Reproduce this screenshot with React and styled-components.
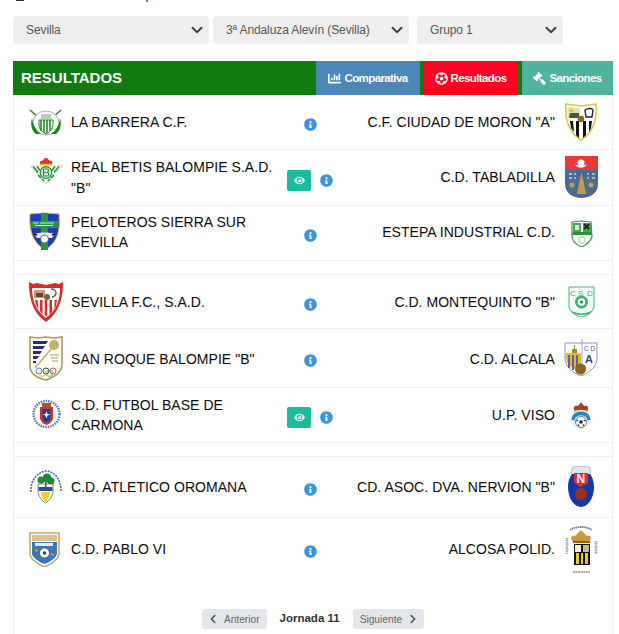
import React from 'react';
import styled, { createGlobalStyle } from 'styled-components';
import { FaInfoCircle, FaEye, FaChartBar, FaFutbol, FaGavel, FaChevronLeft, FaChevronRight } from 'react-icons/fa';
import { ChevronDown } from 'lucide-react';

const GlobalStyle = createGlobalStyle`
    html, body {
        margin: 0;
        padding: 0;
        height: 634px;
        overflow: hidden;
        background: #fff;
        font-family: "Liberation Sans", Arial, sans-serif;
    }
`

const Page = styled.div`
    width: 619px;
`

const TopStrip = styled.div`
    display: flex;
    height: 2px;
    padding-left: 16px;
`

const TopMark = styled.div`
    width: ${props => props.$w}px;
    height: ${props => props.$h}px;
    margin-right: ${props => props.$gap || 0}px;
    background: ${props => props.$color};
`

const Filters = styled.div`
    display: flex;
    margin: 14px 0 17px 13px;
`

const SelectWrap = styled.div`
    position: relative;
    width: ${props => props.$w}px;
    height: 28px;
    margin-right: ${props => props.$gap}px;
`

const FilterSelect = styled.select`
    appearance: none;
    width: 100%;
    height: 100%;
    padding: 0 13px;
    border: none;
    border-radius: 4px;
    background: #eee;
    color: #555;
    font-family: "Liberation Sans", Arial, sans-serif;
    font-size: 12px;
    letter-spacing: -0.1px;
`

const SelectArrow = styled(ChevronDown)`
    position: absolute;
    top: 5px;
    right: 3px;
    color: #444;
    pointer-events: none;
`

const Panel = styled.div`
    width: 600px;
    margin-left: 13px;
`

const PanelHead = styled.div`
    display: flex;
    align-items: stretch;
    height: 34px;
    background: #107c10;
`

const PanelTitle = styled.div`
    flex: 1;
    padding-left: 8px;
    color: #fff;
    font-size: 15px;
    font-weight: 700;
    line-height: 34px;
`

const Tab = styled.div`
    display: flex;
    align-items: center;
    justify-content: center;
    gap: 3px;
    width: ${props => props.$w}px;
    margin-left: ${props => props.$gap || 0}px;
    background: ${props => props.$color};
    color: #fff;
    font-size: 11.5px;
    font-weight: 700;
    letter-spacing: -0.6px;
    svg {
        font-size: 13px;
    }
`

const FlippedGavel = styled(FaGavel)`
    transform: scaleX(-1);
`

const PanelBody = styled.div`
    border-left: 1px solid #eee;
    border-right: 1px solid #eee;
    width: 600px;
    box-sizing: border-box;
`

const Row = styled.div`
    display: grid;
    grid-template-columns: 271px 50px 1fr;
    align-items: center;
    height: ${props => props.$h}px;
    box-sizing: border-box;
    border-bottom: ${props => props.$last ? 'none' : '1px solid #f0f0f0'};
`

const Spacer = styled.div`
    height: 14px;
    box-sizing: border-box;
    border-bottom: 1px solid #f0f0f0;
`

const Team = styled.div`
    display: flex;
    align-items: center;
    justify-content: ${props => props.$away ? 'flex-end' : 'flex-start'};
    gap: ${props => props.$away ? 9 : 8}px;
    height: 100%;
    padding: ${props => props.$away ? '0 14px 0 0' : '0 0 0 15px'};
`

const TeamName = styled.div`
    max-width: 214px;
    margin-top: ${props => props.$shift || 0}px;
    color: #0a0a0a;
    font-size: 14px;
    letter-spacing: 0.04px;
    line-height: 20.5px;
    text-align: ${props => props.$away ? 'right' : 'left'};
`

const CrestSlot = styled.div`
    flex: none;
    align-self: flex-start;
    width: 34px;
    margin-top: ${props => props.$top}px;
    line-height: 0;
`

const Middle = styled.div`
    display: flex;
    align-items: center;
    justify-content: center;
    gap: 9px;
    padding-top: 5px;
`

const InfoIcon = styled(FaInfoCircle)`
    color: #3b94e2;
    font-size: 13px;
`

const WatchButton = styled.div`
    display: flex;
    align-items: center;
    justify-content: center;
    width: 24px;
    height: 21px;
    border-radius: 2px;
    background: #1abc9c;
    color: #d8f5ef;
    font-size: 11px;
`

const Pager = styled.div`
    display: flex;
    justify-content: center;
    align-items: center;
    gap: 13px;
    padding: 29px 0 20px;
`

const PagerButton = styled.div`
    display: flex;
    align-items: center;
    gap: 6px;
    height: 20px;
    padding: ${props => props.$next ? '0 6px 0 7px' : '0 7px 0 6px'};
    border-radius: 3px;
    background: #e2e6ea;
    color: #666;
    font-size: 10.2px;
    svg {
        font-size: 10px;
        color: #555;
    }
`

const PagerLabel = styled.div`
    color: #333;
    font-size: 11.5px;
    font-weight: 700;
    padding-bottom: 3px;
`

const Barrera = () => (
    <svg width="34" height="27" viewBox="0 0 34 27">
        <path d="M1 1l9 8M32 1l-9 8" stroke="#3c7a3c" strokeWidth="1.6" />
        <ellipse cx="17" cy="14" rx="13" ry="12" fill="#fff" stroke="#aaa" />
        <path d="M3 9c1 8 4 12 9 16H7C3 22 1 16 3 9zM31 9c-1 8-4 12-9 16h5c4-3 6-9 4-16z" fill="#1a861a" />
        <path d="M10 11h14v4c0 5-3 8-7 10-4-2-7-5-7-10z" fill="#fff" stroke="#1a861a" />
        <path d="M12 11v11M15 11v13M18 11v13M21 11v11" stroke="#1a861a" strokeWidth="1.500" />
        <path d="M12 5h10v5H12z" fill="#bcccbc" />
    </svg>
)

const Moron = () => (
    <svg width="34" height="38" viewBox="0 0 34 38">
        <path d="M2 1l15 2 15-2c1 13-2 28-15 36C4 29 1 14 2 1z" fill="#fff" stroke="#d9c64a" strokeWidth="1.500" />
        <path d="M3 4l13 1v9H4z" fill="#e4e0c8" />
        <path d="M6 10h9v5H5z" fill="#4a5a30" />
        <path d="M5 7l2-2 1 2 2-1-1 3H6z" fill="#e3c52c" />
        <path d="M21 7c3-2 7-2 8 0l-1 7h-6z" fill="none" stroke="#222" strokeWidth="1.400" />
        <path d="M6 18h3l1 11-3-4zM12 18h3v17l-3-3zM19 18h3v14l-3 3zM25 18h3l-1 7-2 4z" fill="#111" />
        <circle cx="17" cy="16" r="3.200" fill="#8a6a1e" />
    </svg>
)

const Betis = () => (
    <svg width="34" height="27" viewBox="0 0 34 27">
        <path d="M11 8c-1-3 1-5 2-4l3-3h2l3 3c2-1 3 1 2 4z" fill="#d9362c" />
        <path d="M11 7.500h12" stroke="#e5bd2c" strokeWidth="1.600" />
        <path d="M1 9l32 0-16 18z" fill="#fff" stroke="#c9c47a" strokeWidth=".7" />
        <path d="M4 9.500l5 6M8 9.500l3 4M30 9.500l-5 6M26 9.500l-3 4M12 21l-3-3M22 21l3-3M15 24l-2-2M19 24l2-2" stroke="#22913c" strokeWidth="1.700" />
        <circle cx="17" cy="15.500" r="5.800" fill="#d8ead5" stroke="#22863c" strokeWidth="1.200" />
        <path d="M14.500 12v7M14.500 12h3.500c2 0 2 3 0 3.500 2.500 0 2.500 3.500 0 3.500h-3.500M14.500 15.500h3" fill="none" stroke="#22863c" strokeWidth="1.100" />
    </svg>
)

const Tabladilla = () => (
    <svg width="34" height="42" viewBox="0 0 34 42">
        <path d="M1 0h33v14H1z" fill="#e8393a" />
        <circle cx="17" cy="7" r="3.500" fill="#fff" />
        <path d="M11 8c2 5 10 5 12 0-2 2-10 2-12 0z" fill="#fff" />
        <path d="M1 14h33v14c0 9-8 14-16.500 14S1 37 1 28z" fill="#4a6b90" />
        <path d="M17.500 16l2.500 12 2 10H13l2-10z" fill="#c69a4c" />
        <circle cx="8" cy="29" r="2.500" fill="#c69a4c" />
        <circle cx="27" cy="29" r="2.500" fill="#c69a4c" />
        <path d="M5 18h3M5 22h3M10 18h2M10 22h2M23 18h2M23 22h2M28 18h3M28 22h3" stroke="#c9d3de" strokeWidth="1.400" />
    </svg>
)

const Peloteros = () => (
    <svg width="34" height="38" viewBox="0 0 34 38">
        <path d="M1 2l14-1 15 1c1 15 0 27-14 36C3 30 0 17 1 2z" fill="#1d3db4" stroke="#c8b44a" />
        <path d="M12 1h7v37h-7z" fill="#2e8f4a" />
        <path d="M2 9h27v7H2z" fill="#2e8f4a" />
        <path d="M4 11h5M11 11h14M6 13.500h18" stroke="#cfe8d0" strokeWidth="1" />
        <path d="M5 22c6-2 15-2 21 0l-3 4H8z" fill="#e8e8e8" />
        <circle cx="15.500" cy="27" r="4" fill="#fff" stroke="#333" strokeWidth=".7" />
        <path d="M8 23l-3-1M23 23l3-1" stroke="#111" strokeWidth="1.500" />
    </svg>
)

const Estepa = () => (
    <svg width="34" height="27" viewBox="0 0 34 27">
        <path d="M8 2l9-1 10 1 1 15c-2 5-6 8-10.500 10C13 25 9 22 8 17z" fill="#fff" stroke="#2e9a44" strokeWidth="1.200" />
        <path d="M9 3h8v10H9zM19 13h8V3h-8z" fill="#3fae4a" />
        <path d="M20 4l5 5M25 4l-5 5" stroke="#222" strokeWidth="2" />
        <path d="M11 5h4v5h-4z" fill="#e9f5e9" />
        <path d="M8.500 12h19v3h-19z" fill="#2d8f3c" />
        <circle cx="18" cy="20" r="3.200" fill="#fff" stroke="#bbb" />
    </svg>
)

const Sevilla = () => (
    <svg width="34" height="40" viewBox="0 0 34 40">
        <path d="M0 0l4 2 4-1 9 2 9-2 4 1 4-2c0 15-3 30-17 40C3 30 0 15 0 0z" fill="#d92c2c" />
        <path d="M3 6h28c0 11-3 22-14 30C6 28 3 17 3 6z" fill="#fff" />
        <path d="M6 18h2.500l1 9-2-3zM11 18h2.500v14l-2.500-3zM15.700 18h2.500v17l-2.500-2zM20.500 18H23v12l-2.500 3zM25.500 18H28l-1 6-1.500 3z" fill="#d92c2c" />
        <path d="M5 8h11v8H5z" fill="#caa07a" />
        <path d="M7 11h7v4H7z" fill="#7a3b2b" />
        <circle cx="18" cy="15" r="3" fill="#8a5a2c" />
        <path d="M22 7c3 0 5 2 5 4s-2 4-4 4" fill="none" stroke="#555" strokeWidth="1.400" />
    </svg>
)

const Montequinto = () => (
    <svg width="34" height="31" viewBox="0 0 34 31">
        <path d="M5 1h25v20c-2 6-7 9-12.500 10C12 30 7 27 5 21z" fill="#f4fbf6" stroke="#48b27a" />
        <text x="6" y="9.500" fontSize="8" fill="#48b27a" fontFamily="Liberation Sans">C</text>
        <text x="14" y="9.500" fontSize="8" fill="#48b27a" fontFamily="Liberation Sans">S</text>
        <text x="23" y="9.500" fontSize="8" fill="#48b27a" fontFamily="Liberation Sans">D</text>
        <circle cx="17.500" cy="16" r="6.500" fill="#3fae72" />
        <circle cx="17.500" cy="16" r="3.800" fill="#fff" />
        <circle cx="17.500" cy="16" r="1.500" fill="#1f7a4a" />
        <path d="M8 26c5 3 14 3 19 0" stroke="#48b27a" strokeWidth="1.500" fill="none" />
    </svg>
)

const SanRoque = () => (
    <svg width="34" height="45" viewBox="0 0 34 45">
        <path d="M1 1l8 1 8-1 8 1 8-1v28c0 8-8 12-16 15C8 42 1 38 1 30z" fill="#fdfcf4" stroke="#a99b5c" strokeWidth="1.600" />
        <path d="M4 5h15l-2 3H4zM4 10h12l-2 3H4zM4 15h9l-2 3H4zM4 20h6l-2 3H4zM4 25h3v2H4z" fill="#2f2c6e" />
        <path d="M6 32l17-20" stroke="#b8a964" strokeWidth="1.200" />
        <circle cx="25" cy="9" r="5" fill="#bfb06a" />
        <path d="M21 19h9M22 22h7M23 25h6" stroke="#a89a5a" strokeWidth="1.100" />
        <g fill="none" strokeWidth=".9">
            <circle cx="10" cy="35" r="3" stroke="#4a7fc0" />
            <circle cx="17" cy="35" r="3" stroke="#333" />
            <circle cx="24" cy="35" r="3" stroke="#c94a4a" />
            <circle cx="13.500" cy="37.500" r="3" stroke="#d8b84a" />
            <circle cx="20.500" cy="37.500" r="3" stroke="#4aa05a" />
        </g>
    </svg>
)

const Alcala = () => (
    <svg width="34" height="37" viewBox="0 0 34 37">
        <path d="M1 4h32v15c0 9-8 15-16 18C9 34 1 28 1 19z" fill="#fff" stroke="#8b93c4" strokeWidth="1" />
        <path d="M18 0v37" stroke="#8b93c4" strokeWidth=".8" />
        <path d="M2 14h15v18C9 30 2 26 2 19z" fill="#d8bd3c" />
        <path d="M5 16v13M9 16v15M13 16v15" stroke="#6c5aa6" strokeWidth="2" />
        <path d="M8 10h5v4H8zM10 6h1v4h-1z" fill="#a8893c" />
        <text x="20" y="12" fontSize="6.500" fill="#4a5290" fontFamily="Liberation Sans">C D</text>
        <text x="21" y="24" fontSize="11" fontWeight="700" fill="#3c4484" fontFamily="Liberation Sans">A</text>
        <circle cx="16.500" cy="30" r="5.500" fill="#8a6420" />
    </svg>
)

const Carmona = () => (
    <svg width="34" height="33" viewBox="0 0 34 33">
        <circle cx="17.500" cy="17" r="13" fill="none" stroke="#5c7cb0" strokeWidth="2.600" strokeDasharray="1.500 1" />
        <path d="M13 6h9v4h-9z" fill="#b84a3c" />
        <path d="M11 10h13v12c-2 4-4 5-6.500 6-2.500-1-4.500-2-6.500-6z" fill="#c23c2c" />
        <path d="M13.500 12h8v9c-1 3-2.500 3.500-4 4.500-1.500-1-3-1.500-4-4.500z" fill="#1c3f9a" />
        <path d="M17.500 14l1 3 3 .5-3 1-1 3-1-3-3-1 3-.5z" fill="#fff" />
    </svg>
)

const Viso = () => (
    <svg width="34" height="29" viewBox="0 0 34 29">
        <path d="M10 9c-1-4 2-5 3-4l2-1 2-3 2 3 2 1c1-1 4 0 3 4z" fill="#a5402c" />
        <path d="M10 9h14v2H10z" fill="#d8a92c" />
        <circle cx="17" cy="19" r="10" fill="#eef5fa" />
        <path d="M7.500 19c0-6 5-8.500 9.500-8.500S26.500 13 26.500 19l-3 .5c0-3-3-5-6.500-5s-6.500 2-6.500 5z" fill="#2d82c9" />
        <circle cx="17" cy="21" r="5.500" fill="#fff" stroke="#444" strokeWidth=".7" />
        <circle cx="17" cy="21" r="1.800" fill="#222" />
        <path d="M12.500 19l1.500 1M21.500 19l-1.500 1M14 25l1-1.500M20 25l-1-1.500" stroke="#222" strokeWidth="1.300" />
    </svg>
)

const Oromana = () => (
    <svg width="34" height="33" viewBox="0 0 34 33">
        <path d="M2 22C1 10 9 2 17 1c8 0 15 8 15 20" fill="none" stroke="#4466b4" strokeWidth="1.600" strokeDasharray="2 1" />
        <circle cx="12" cy="10" r="3.500" fill="#1d8a3a" />
        <circle cx="18" cy="8" r="4.500" fill="#1d8a3a" />
        <circle cx="22" cy="11" r="3.500" fill="#1d8a3a" />
        <path d="M9 14h15v8c-1 5-4 9-7.500 11C13 31 10 27 9 22z" fill="#fff" stroke="#334" strokeWidth=".6" />
        <path d="M16 12h1.500v6H16z" fill="#6a4a2a" />
        <path d="M12 22h9c0 4-2 8-4.500 10C14 30 12 26 12 22z" fill="#f0cf2c" />
        <path d="M9.500 17h14v4h-14z" fill="#2a4aa4" />
    </svg>
)

const Nervion = () => (
    <svg width="34" height="41" viewBox="0 0 34 41">
        <path d="M9 1c5-1 12-1 16 0 2 3 2 6 1 9H8C7 7 7 4 9 1z" fill="#dfe5ee" stroke="#9aa8c4" strokeWidth=".7" />
        <path d="M4 21c0-5 1-9 4-13h18c3 4 4 8 4 13 0 11-6 20-13 20S4 32 4 21z" fill="#0f3aa8" />
        <path d="M10 7h14v10l-7 4-7-4z" fill="#e02a3a" />
        <text x="12.500" y="17" fontSize="12" fontWeight="700" fill="#fff" fontFamily="Liberation Sans">N</text>
        <circle cx="17" cy="28" r="6" fill="#a0301c" />
    </svg>
)

const PabloVI = () => (
    <svg width="34" height="35" viewBox="0 0 34 35">
        <path d="M1 1h29v21c0 6-8 10-14.500 13C9 32 1 28 1 22z" fill="#fff" stroke="#c7a86c" strokeWidth="1.600" />
        <path d="M3 3h25v6H3z" fill="#d8c294" />
        <path d="M3 10h25v12c-1 4-7 8-12.500 10C10 30 4 26 3 22z" fill="#3a79b4" />
        <path d="M6 11h18v3H6z" fill="#e8f0f5" />
        <circle cx="15.500" cy="21" r="5" fill="#fff" stroke="#234" strokeWidth=".6" />
        <circle cx="15.500" cy="21" r="1.800" fill="#345" />
        <path d="M22 22l3 1M6 18l3 1" stroke="#c8a83c" strokeWidth="1.400" />
    </svg>
)

const Alcosa = () => (
    <svg width="34" height="50" viewBox="0 0 34 50">
        <path d="M6 6c6-4 16-4 22 0" fill="none" stroke="#777" strokeWidth="1.800" strokeDasharray="1.500 .6" />
        <path d="M3 14v16M32 17v13" stroke="#aaa" strokeWidth="2.600" strokeDasharray="1.500 .6" />
        <path d="M9 48h17" stroke="#aaa" strokeWidth="2" strokeDasharray="2 .6" />
        <path d="M8 17c-2-4 0-6 3-5l3-3 3-3 3 3 3 3c3-1 5 1 3 5z" fill="#c89a3c" />
        <path d="M9 17h17v2H9z" fill="#a5551c" />
        <path d="M10 20h16v21H10z" fill="#111" />
        <path d="M11 21h6v7h-6z" fill="#f5f1d8" />
        <path d="M19 21h6v7h-6z" fill="#c8b98a" />
        <path d="M12 29h3v11h-3zM17 29h2v11h-2zM21 29h3v11h-3z" fill="#e6c82c" />
    </svg>
)

const rows = [
    { h: 55, home: 'LA BARRERA C.F.', away: 'C.F. CIUDAD DE MORON "A"', HomeCrest: Barrera, homeTop: 14, AwayCrest: Moron, awayTop: 8 },
    { h: 56, home: 'REAL BETIS BALOMPIE S.A.D. "B"', away: 'C.D. TABLADILLA', HomeCrest: Betis, homeTop: 7, AwayCrest: Tabladilla, awayTop: 6, watch: true },
    { h: 55, home: 'PELOTEROS SIERRA SUR SEVILLA', away: 'ESTEPA INDUSTRIAL C.D.', HomeCrest: Peloteros, homeTop: 6, AwayCrest: Estepa, awayTop: 14, gapAfter: true, shift: -2 },
    { h: 54, home: 'SEVILLA F.C., S.A.D.', away: 'C.D. MONTEQUINTO "B"', HomeCrest: Sevilla, homeTop: 7, AwayCrest: Montequinto, awayTop: 11, shift: 2 },
    { h: 59, home: 'SAN ROQUE BALOMPIE "B"', away: 'C.D. ALCALA', HomeCrest: SanRoque, homeTop: 7, AwayCrest: Alcala, awayTop: 10, shift: 2 },
    { h: 55, home: 'C.D. FUTBOL BASE DE CARMONA', away: 'U.P. VISO', HomeCrest: Carmona, homeTop: 9, AwayCrest: Viso, awayTop: 13, watch: true, gapAfter: true },
    { h: 61, home: 'C.D. ATLETICO OROMANA', away: 'CD. ASOC. DVA. NERVION "B"', HomeCrest: Oromana, homeTop: 13, AwayCrest: Nervion, awayTop: 9 },
    { h: 62, home: 'C.D. PABLO VI', away: 'ALCOSA POLID.', HomeCrest: PabloVI, homeTop: 14, AwayCrest: Alcosa, awayTop: 6, last: true },
]

const filters = [
    { label: 'Sevilla', w: 196, gap: 4 },
    { label: '3ª Andaluza Alevín (Sevilla)', w: 196, gap: 8 },
    { label: 'Grupo 1', w: 146, gap: 0 },
]

const App = () => {
    return (
        <Page>
            <GlobalStyle />
            <TopStrip>
                <TopMark $w={8} $h={1} $gap={122} $color="#333" />
                <TopMark $w={2} $h={2} $color="#4a8fc0" />
            </TopStrip>
            <Filters>
                {filters.map(f => (
                    <SelectWrap key={f.label} $w={f.w} $gap={f.gap}>
                        <FilterSelect defaultValue={f.label}>
                            <option>{f.label}</option>
                        </FilterSelect>
                        <SelectArrow size={18} strokeWidth={2.7} />
                    </SelectWrap>
                ))}
            </Filters>
            <Panel>
                <PanelHead>
                    <PanelTitle>RESULTADOS</PanelTitle>
                    <Tab $w={104} $color="#4d86b8"><FaChartBar />Comparativa</Tab>
                    <Tab $w={95} $gap={3} $color="#ff0022"><FaFutbol />Resultados</Tab>
                    <Tab $w={91} $gap={4} $color="#4fb3a0"><FlippedGavel />Sanciones</Tab>
                </PanelHead>
                <PanelBody>
                    {rows.map(({ HomeCrest, AwayCrest, ...row }) => (
                        <React.Fragment key={row.home}>
                            <Row $h={row.h} $last={row.last}>
                                <Team>
                                    <CrestSlot $top={row.homeTop}><HomeCrest /></CrestSlot>
                                    <TeamName $shift={row.shift}>{row.home}</TeamName>
                                </Team>
                                <Middle>
                                    {row.watch && <WatchButton><FaEye /></WatchButton>}
                                    <InfoIcon />
                                </Middle>
                                <Team $away>
                                    <TeamName $away $shift={row.shift}>{row.away}</TeamName>
                                    <CrestSlot $top={row.awayTop}><AwayCrest /></CrestSlot>
                                </Team>
                            </Row>
                            {row.gapAfter && <Spacer />}
                        </React.Fragment>
                    ))}
                    <Pager>
                        <PagerButton><FaChevronLeft />Anterior</PagerButton>
                        <PagerLabel>Jornada 11</PagerLabel>
                        <PagerButton $next>Siguiente<FaChevronRight /></PagerButton>
                    </Pager>
                </PanelBody>
            </Panel>
        </Page>
    )
}

export default App;
